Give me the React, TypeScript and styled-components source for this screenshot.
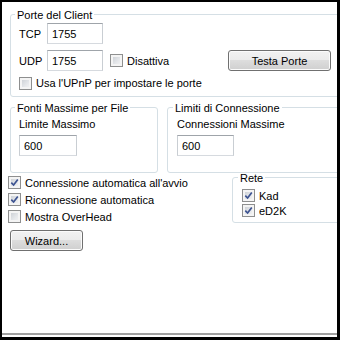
import React from 'react';
import styled, { createGlobalStyle } from 'styled-components';

const GlobalStyle = createGlobalStyle`
  html, body {
    margin: 0;
    padding: 0;
    background: #fff;
  }
  body {
    font-family: 'Liberation Sans', Arial, sans-serif;
    font-size: 11px;
    color: #000;
  }
`;

const Frame = styled.div`
  box-sizing: border-box;
  width: 340px;
  height: 340px;
  border-style: solid;
  border-color: #000;
  border-width: 2px 3px 3px 2px;
  background: #fff;
  overflow: hidden;
  display: flex;
  flex-direction: column;
`;

const Group = styled.fieldset<{ $pad: string }>`
  box-sizing: border-box;
  min-width: 0;
  margin: 0;
  border: 1px solid #d5dfe5;
  border-radius: 3px;
  padding: ${(p) => p.$pad};
  display: flex;
  flex-direction: column;
`;

const Legend = styled.legend`
  font-size: 11px;
  line-height: 14px;
  padding: 2px 2px 0;
  margin-left: -4px;
`;

const PortsGroup = styled(Group)`
  margin: 4px -8px 0 8px;
`;

const LimitsRow = styled.div`
  display: flex;
  gap: 9px;
  margin: 2px -8px 0 8px;
`;

const SourcesGroup = styled(Group)`
  width: 148px;
  flex: none;
`;

const ConnGroup = styled(Group)`
  flex: 1;
`;

const BottomRow = styled.div`
  display: flex;
  align-items: flex-start;
`;

const OptionsColumn = styled.div`
  display: flex;
  flex-direction: column;
  padding: 1px 0 0 6px;
`;

const NetGroup = styled(Group)`
  width: 113px;
  margin: -4px -8px 0 auto;
`;

const FieldRow = styled.div<{ $top?: number }>`
  display: flex;
  align-items: center;
  height: 21px;
  margin-top: ${(p) => p.$top ?? 0}px;
`;

const PortLabel = styled.span`
  width: 28px;
  flex: none;
`;

const Caption = styled.div`
  line-height: 14px;
  margin-bottom: 4px;
`;

const TextBox = styled.input<{ $width: number }>`
  box-sizing: border-box;
  width: ${(p) => p.$width}px;
  height: 21px;
  margin: 0;
  padding: 0 4px;
  border: 1px solid;
  border-color: #9fa4aa #c9ced3 #d6dadf #c9ced3;
  background: #fff;
  font: inherit;
  font-size: 11px;
  color: #000;
  outline: none;
`;

const CheckRow = styled.label<{ $height: number; $top?: number }>`
  display: flex;
  align-items: center;
  gap: 4px;
  height: ${(p) => p.$height}px;
  margin-top: ${(p) => p.$top ?? 0}px;
  white-space: nowrap;
  line-height: 14px;
`;

const Box = styled.span`
  box-sizing: border-box;
  width: 13px;
  height: 13px;
  flex: none;
  border: 1px solid #8e8f8f;
  background: linear-gradient(135deg, #c4c9cf 0%, #e6e8eb 60%, #f6f6f6 100%);
  box-shadow: inset 0 0 0 2px #f4f4f4;
  display: flex;
  align-items: center;
  justify-content: center;
`;

const Button = styled.button<{ $width: number }>`
  box-sizing: border-box;
  width: ${(p) => p.$width}px;
  height: 21px;
  flex: none;
  margin: 0;
  padding: 0;
  border: 1px solid #707070;
  border-radius: 3px;
  background: linear-gradient(#f2f2f2 0%, #ebebeb 49%, #dddddd 50%, #cfcfcf 100%);
  box-shadow: inset 0 0 0 1px #fbfbfb;
  font: inherit;
  font-size: 11px;
  color: #000;
`;

const TestButton = styled(Button)`
  margin-left: auto;
`;

const WizardButton = styled(Button)`
  margin: 5px 0 0 2px;
`;

const Disable = styled(CheckRow)`
  margin-left: 7px;
`;

const Rule = styled.div`
  margin-top: auto;
  margin-bottom: 2px;
  height: 2px;
  background: #a0a0a0;
`;

const CheckBox = ({ checked, label, height, top }: { checked?: boolean; label: string; height: number; top?: number }) => (
  <CheckRow $height={height} $top={top}>
    <Box>
      {checked && (
        <svg width="9" height="9" viewBox="0 0 9 9">
          <path d="M1.3 4.6 L3.6 7 L7.8 1.4" fill="none" stroke="#3d5391" strokeWidth="1.7" />
        </svg>
      )}
    </Box>
    {label}
  </CheckRow>
);

export default function App() {
  return (
    <>
      <GlobalStyle />
      <Frame>
        <PortsGroup $pad="1px 13px 6px 8px">
          <Legend>Porte del Client</Legend>
          <FieldRow>
            <PortLabel>TCP</PortLabel>
            <TextBox $width={56} value="1755" readOnly />
          </FieldRow>
          <FieldRow $top={6}>
            <PortLabel>UDP</PortLabel>
            <TextBox $width={56} value="1755" readOnly />
            <Disable $height={21}>
              <Box />
              Disattiva
            </Disable>
            <TestButton $width={103}>Testa Porte</TestButton>
          </FieldRow>
          <CheckBox label="Usa l'UPnP per impostare le porte" height={14} top={5} />
        </PortsGroup>

        <LimitsRow>
          <SourcesGroup $pad="2px 8px 16px 8px">
            <Legend>Fonti Massime per File</Legend>
            <Caption>Limite Massimo</Caption>
            <TextBox $width={58} value="600" readOnly />
          </SourcesGroup>
          <ConnGroup $pad="2px 8px 16px 9px">
            <Legend>Limiti di Connessione</Legend>
            <Caption>Connessioni Massime</Caption>
            <TextBox $width={57} value="600" readOnly />
          </ConnGroup>
        </LimitsRow>

        <BottomRow>
          <OptionsColumn>
            <CheckBox checked label="Connessione automatica all'avvio" height={17} />
            <CheckBox checked label="Riconnessione automatica" height={17} />
            <CheckBox label="Mostra OverHead" height={17} />
            <WizardButton $width={73}>Wizard...</WizardButton>
          </OptionsColumn>
          <NetGroup $pad="3px 4px 4px 9px">
            <Legend>Rete</Legend>
            <CheckBox checked label="Kad" height={15} />
            <CheckBox checked label="eD2K" height={15} />
          </NetGroup>
        </BottomRow>

        <Rule />
      </Frame>
    </>
  );
}
